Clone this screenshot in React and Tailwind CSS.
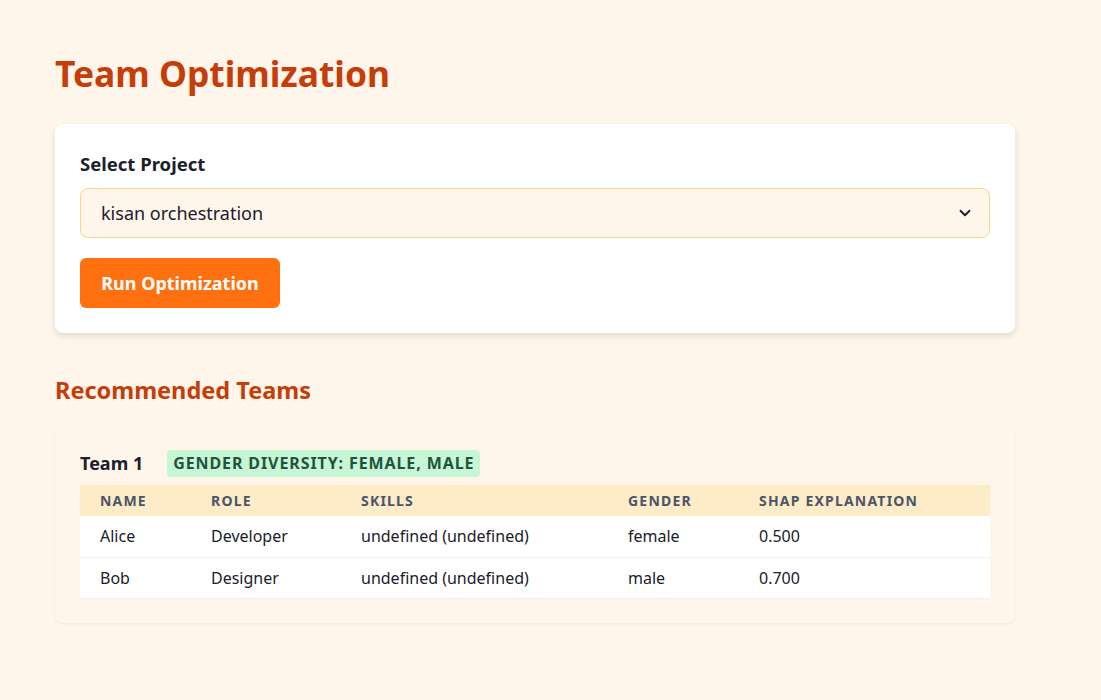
import React, { useState } from 'react';
import { ChevronDown } from 'lucide-react';

const team = [
    { name: 'Alice', role: 'Developer', skills: 'undefined (undefined)', gender: 'female', shap: '0.500' },
    { name: 'Bob', role: 'Designer', skills: 'undefined (undefined)', gender: 'male', shap: '0.700' },
];

export default function App() {
    const [project, setProject] = useState('kisan orchestration');

    return (
        <div className="min-h-screen bg-[#fff6eb] font-['Noto_Sans',sans-serif]">
            <div className="w-[960px] ml-[55px] pt-[48px] pb-10">
                <h1 className="text-[35.4px] leading-[50px] font-bold text-[#c53d08]">Team Optimization</h1>

                <div className="mt-[26px] bg-white rounded-lg shadow-[0_3px_6px_rgba(0,0,0,0.12)] px-[25px] pt-[26px] pb-[25px]">
                    <label className="block text-[18.5px] leading-[28px] font-bold text-[#1a202c]">Select Project</label>
                    <div className="relative mt-[10px]">
                        <select
                            value={project}
                            onChange={(e) => setProject(e.target.value)}
                            className="appearance-none w-full h-[50px] pl-[20px] pr-10 bg-[#fff6eb] border border-[#fbd38d] rounded-lg text-[18px] text-[#1a202c] outline-none"
                        >
                            <option>kisan orchestration</option>
                        </select>
                        <ChevronDown size={18} strokeWidth={2.5} className="absolute right-[16px] top-[16px] text-[#1a202c] pointer-events-none" />
                    </div>
                    <button className="mt-[20px] h-[50px] w-[200px] bg-[#ff7010] rounded-md text-white text-[18px] font-bold">
                        Run Optimization
                    </button>
                </div>

                <h2 className="mt-[40px] text-[23.5px] leading-[34px] font-bold text-[#c53d08]">Recommended Teams</h2>

                <div className="mt-[16px] bg-[#fff6eb] rounded-lg shadow-[0_1px_3px_rgba(0,0,0,0.06)] px-[25px] pt-[26px] pb-[24px]">
                    <div className="flex items-center gap-[24px] h-[28px]">
                        <span className="text-[18px] font-bold text-[#1a202c]">Team 1</span>
                        <span className="bg-[#c6f6d5] text-[#22543d] text-[16px] font-bold uppercase px-[6px] leading-[27px] rounded-sm tracking-[0.9px]">
                            Gender Diversity: female, male
                        </span>
                    </div>
                    <table className="mt-[8px] w-full text-left border-collapse">
                        <thead>
                            <tr className="bg-[#feebc8] h-[31px]">
                                <th className="w-[111px] pl-[20px] text-[14px] font-bold uppercase tracking-[1.2px] text-[#4a5568]">Name</th>
                                <th className="w-[150px] pl-[20px] text-[14px] font-bold uppercase tracking-[1.2px] text-[#4a5568]">Role</th>
                                <th className="w-[267px] pl-[20px] text-[14px] font-bold uppercase tracking-[1.2px] text-[#4a5568]">Skills</th>
                                <th className="w-[131px] pl-[20px] text-[14px] font-bold uppercase tracking-[1.2px] text-[#4a5568]">Gender</th>
                                <th className="pl-[20px] text-[14px] font-bold uppercase tracking-[1.2px] text-[#4a5568]">SHAP Explanation</th>
                            </tr>
                        </thead>
                        <tbody>
                            {team.map((m) => (
                                <tr key={m.name} className="bg-white h-[41px] border-b border-[#edf2f7] text-[16px] text-[#1a202c]">
                                    <td className="pl-[20px]">{m.name}</td>
                                    <td className="pl-[20px]">{m.role}</td>
                                    <td className="pl-[20px]">{m.skills}</td>
                                    <td className="pl-[20px]">{m.gender}</td>
                                    <td className="pl-[20px]">{m.shap}</td>
                                </tr>
                            ))}
                        </tbody>
                    </table>
                </div>
            </div>
        </div>
    );
}
